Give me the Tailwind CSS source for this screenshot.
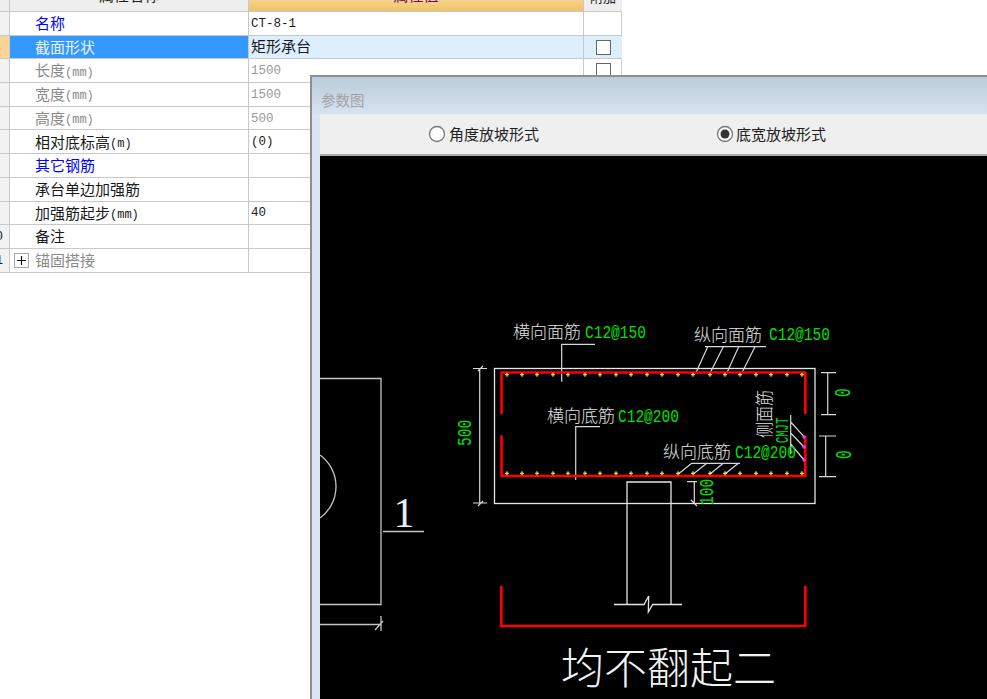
<!DOCTYPE html>
<html lang="zh">
<head>
    <meta charset="UTF-8">
    <title>参数图</title>
    <script src="https://cdn.jsdelivr.net/npm/@tailwindcss/browser@4"></script>
</head>
<body class="relative w-[987px] h-[699px] overflow-hidden bg-white font-['Liberation_Mono','Noto_Sans_CJK_SC',monospace] text-[15px] text-[#1a1a1a]">

    <!-- 属性表 -->
    <div class="w-[622px] grid grid-cols-[10px_239px_335px_38px] grid-rows-[12px_repeat(11,23.7px)] border-r border-[#d0d0d0]">
        <div class="bg-[#eeeeee] border-r border-b border-[#c8c8c8]"></div>
        <div class="bg-[#eeeeee] border-r border-b border-[#c8c8c8] overflow-hidden flex items-end justify-center leading-[15px]"><span class="mb-[6px]">属性名称</span></div>
        <div class="bg-gradient-to-b from-[#f6d48c] to-[#f1c264] border-r border-b border-[#c8c8c8] overflow-hidden flex items-end justify-center leading-[15px] text-[#6a0a6a]"><span class="mb-[6px]">属性值</span></div>
        <div class="bg-[#eeeeee] border-b border-[#c8c8c8] overflow-hidden flex items-end justify-center leading-[13px] text-[13px]"><span class="mb-[6px]">附加</span></div>

        <div class="bg-[#f2f2f2] border-r border-b border-[#c8c8c8]"></div>
        <div class="border-r border-b border-[#c8c8c8] pl-[25px] pt-[6px] flex items-center text-[#0000ff]">名称</div>
        <div class="border-r border-b border-[#c8c8c8] pl-[2px] pt-[2px] flex items-center text-[12.5px]">CT-8-1</div>
        <div class="border-b border-[#c8c8c8]"></div>

        <div class="bg-[#fbd596] border-r border-b border-[#c8c8c8]"></div>
        <div class="bg-[#3399ff] border-r border-b border-[#c8c8c8] pl-[25px] pt-[6px] flex items-center text-[#eaf4ff]">截面形状</div>
        <div class="bg-[#ddeeff] border-r border-b border-[#c8c8c8] pl-[2px] pt-[4px] flex items-center">矩形承台</div>
        <div class="bg-[#ddeeff] border-b border-[#c8c8c8] flex items-center justify-center"><span class="block w-[15px] h-[15px] bg-white border border-[#666666]"></span></div>

        <div class="bg-[#f2f2f2] border-r border-b border-[#c8c8c8]"></div>
        <div class="border-r border-b border-[#c8c8c8] pl-[25px] pt-[6px] flex items-center text-[#8a8a8a]">长度<span class="text-[12px] mb-[2px]">(mm)</span></div>
        <div class="border-r border-b border-[#c8c8c8] pl-[2px] pt-[2px] flex items-center text-[12.5px] text-[#999999]">1500</div>
        <div class="border-b border-[#c8c8c8] flex items-center justify-center"><span class="block w-[15px] h-[15px] bg-white border border-[#666666]"></span></div>

        <div class="bg-[#f2f2f2] border-r border-b border-[#c8c8c8]"></div>
        <div class="border-r border-b border-[#c8c8c8] pl-[25px] pt-[6px] flex items-center text-[#8a8a8a]">宽度<span class="text-[12px] mb-[2px]">(mm)</span></div>
        <div class="border-r border-b border-[#c8c8c8] pl-[2px] pt-[2px] flex items-center text-[12.5px] text-[#999999]">1500</div>
        <div class="border-b border-[#c8c8c8]"></div>

        <div class="bg-[#f2f2f2] border-r border-b border-[#c8c8c8]"></div>
        <div class="border-r border-b border-[#c8c8c8] pl-[25px] pt-[6px] flex items-center text-[#8a8a8a]">高度<span class="text-[12px] mb-[2px]">(mm)</span></div>
        <div class="border-r border-b border-[#c8c8c8] pl-[2px] pt-[2px] flex items-center text-[12.5px] text-[#999999]">500</div>
        <div class="border-b border-[#c8c8c8]"></div>

        <div class="bg-[#f2f2f2] border-r border-b border-[#c8c8c8]"></div>
        <div class="border-r border-b border-[#c8c8c8] pl-[25px] pt-[6px] flex items-center">相对底标高<span class="text-[12px] mb-[2px]">(m)</span></div>
        <div class="border-r border-b border-[#c8c8c8] pl-[2px] pt-[2px] flex items-center text-[12.5px]">(0)</div>
        <div class="border-b border-[#c8c8c8]"></div>

        <div class="bg-[#f2f2f2] border-r border-b border-[#c8c8c8]"></div>
        <div class="border-r border-b border-[#c8c8c8] pl-[25px] pt-[6px] flex items-center text-[#0000ff]">其它钢筋</div>
        <div class="border-r border-b border-[#c8c8c8]"></div>
        <div class="border-b border-[#c8c8c8]"></div>

        <div class="bg-[#f2f2f2] border-r border-b border-[#c8c8c8]"></div>
        <div class="border-r border-b border-[#c8c8c8] pl-[25px] pt-[6px] flex items-center">承台单边加强筋</div>
        <div class="border-r border-b border-[#c8c8c8]"></div>
        <div class="border-b border-[#c8c8c8]"></div>

        <div class="bg-[#f2f2f2] border-r border-b border-[#c8c8c8]"></div>
        <div class="border-r border-b border-[#c8c8c8] pl-[25px] pt-[6px] flex items-center">加强筋起步<span class="text-[12px] mb-[2px]">(mm)</span></div>
        <div class="border-r border-b border-[#c8c8c8] pl-[2px] pt-[2px] flex items-center text-[12.5px]">40</div>
        <div class="border-b border-[#c8c8c8]"></div>

        <div class="bg-[#f2f2f2] border-r border-b border-[#c8c8c8] overflow-hidden flex items-center justify-end pr-[6px] pt-[2px] text-[12.5px]"><span class="shrink-0">10</span></div>
        <div class="border-r border-b border-[#c8c8c8] pl-[25px] pt-[6px] flex items-center">备注</div>
        <div class="border-r border-b border-[#c8c8c8]"></div>
        <div class="border-b border-[#c8c8c8]"></div>

        <div class="bg-[#f2f2f2] border-r border-b border-[#c8c8c8] overflow-hidden flex items-center justify-end pr-[6px] pt-[2px] text-[12.5px]"><span class="shrink-0">11</span></div>
        <div class="border-r border-b border-[#c8c8c8] pl-[4px] flex items-center gap-[6px] text-[#8a8a8a]">
            <svg width="15" height="15" viewBox="0 0 15 15"><rect x="0.5" y="0.5" width="14" height="14" fill="#fff" stroke="#a8a8a8"/><path d="M3 7.5h9M7.5 3v9" stroke="#111" stroke-width="1.2"/></svg>
            <span class="pt-[6px]">锚固搭接</span>
        </div>
        <div class="border-r border-b border-[#c8c8c8]"></div>
        <div class="border-b border-[#c8c8c8]"></div>
    </div>

    <!-- 参数图窗口 -->
    <div class="absolute left-[310px] top-[75px] w-[677px] h-[624px] flex flex-col border-l-2 border-t-2 border-[#8f8f8f] bg-[#d9e5f2]">
        <div class="h-[37px] shrink-0 flex items-center pl-[9px] pt-[15px] bg-gradient-to-b from-[#bbccd9] to-[#d6e3f1] text-[14.5px] text-[#a3a3a3]">参数图</div>
        <div class="flex-1 ml-[8px] flex flex-col min-h-0">
            <div class="h-[42px] shrink-0 flex items-center bg-[#efefef] border-b-2 border-[#a9a9a9] text-[15px] text-[#222222]">
                <div class="flex items-center ml-[108px] w-[288px]">
                    <svg class="mr-[3px]" width="18" height="18" viewBox="0 0 18 18"><circle cx="9" cy="9" r="7.5" fill="#fff" stroke="#777" stroke-width="1.3"/></svg>
                    <span class="pt-[6px]">角度放坡形式</span>
                </div>
                <div class="flex items-center">
                    <svg class="mr-[2px]" width="18" height="18" viewBox="0 0 18 18"><circle cx="9" cy="9" r="7.5" fill="#fff" stroke="#777" stroke-width="1.3"/><circle cx="9" cy="9" r="4.5" fill="#333"/></svg>
                    <span class="pt-[6px]">底宽放坡形式</span>
                </div>
            </div>
            <!-- viewBox 用页面坐标,方便对照截图 -->
            <svg class="block flex-1 bg-black" width="667" height="543" viewBox="320 156 667 543" fill="none" font-family="'Noto Sans CJK SC', sans-serif">
                <!-- 左侧剖面 -->
                <g stroke="#c4c4c4" stroke-width="1.3">
                    <path d="M320 378.5H381V604.5H320"/>
                    <path d="M320 455A39 39 0 0 1 320 518"/>
                    <path d="M383 531.5H424"/>
                    <path d="M320 624.5H381M381 616V631M375 630L383 621"/>
                </g>
                <text x="404" y="527" text-anchor="middle" font-family="'Liberation Serif', serif" font-size="42" fill="#eeeeee">1</text>

                <!-- 外框和柱 -->
                <g stroke="#e6e6e6" stroke-width="1.3">
                    <rect x="494.5" y="368.5" width="320.5" height="135"/>
                    <path d="M627 503.5V482H671V604.5M627 503V604.5"/>
                    <path d="M614 604.5H644L648.7 596L648.3 612L652.7 604.5H682"/>
                </g>

                <!-- 标注线 -->
                <g stroke="#d8d8d8" stroke-width="1.2">
                    <path d="M479.7 368.5V503M473 368.5H487M473 503H487M478 371L483 366M478 506L483 501"/>
                    <path d="M827.7 372.7V414.7M821 372.7H836M821 414.7H836"/>
                    <path d="M825.7 436V476.7M819 436H836M819 476.7H836"/>
                    <path d="M694.3 481.7V503M687 481.7H697M691 500L697 506"/>
                    <path d="M561.7 381.7V344.3H595"/>
                    <path d="M575.7 480V426.7H600"/>
                    <path d="M705 346.7H766M707.7 346.7L695.7 373.3M723.3 346.7L710 373.3M738.7 346.7L726.7 373.3M755 346.7L741.7 373.3"/>
                    <path d="M691.7 463.3H740M691.7 463.3L678.3 474M706.7 463.3L693.3 474M723.3 463.3L710 474M738.3 463.3L725 474"/>
                    <path d="M790.7 415V454M790.7 422L804 436.7M790.7 433L804 447M790.7 444L804 460"/>
                </g>

                <!-- 钢筋 -->
                <g stroke="#ff0000" stroke-width="2.6" stroke-linejoin="round">
                    <path d="M501.5 414V372.5H805.3V414"/>
                    <path d="M501.5 435.3V476H805.3V436"/>
                    <path d="M501.3 585.7V626H805.3V585.7"/>
                </g>
                <g stroke="#ffff33" stroke-width="1.1">
                    <path d="M505 374.7h4M507 372.7v4M520 374.7h4M522 372.7v4M535 374.7h4M537 372.7v4M551 374.7h4M553 372.7v4M566 374.7h4M568 372.7v4M583 374.7h4M585 372.7v4M598 374.7h4M600 372.7v4M614 374.7h4M616 372.7v4M629 374.7h4M631 372.7v4M645 374.7h4M647 372.7v4M660 374.7h4M662 372.7v4M676 374.7h4M678 372.7v4M691 374.7h4M693 372.7v4M708 374.7h4M710 372.7v4M723 374.7h4M725 372.7v4M738 374.7h4M740 372.7v4M754 374.7h4M756 372.7v4M769 374.7h4M771 372.7v4M785 374.7h4M787 372.7v4M800 374.7h4M802 372.7v4"/>
                    <path d="M505 473.3h4M507 471.3v4M520 473.3h4M522 471.3v4M535 473.3h4M537 471.3v4M551 473.3h4M553 471.3v4M566 473.3h4M568 471.3v4M583 473.3h4M585 471.3v4M598 473.3h4M600 471.3v4M614 473.3h4M616 471.3v4M629 473.3h4M631 471.3v4M645 473.3h4M647 471.3v4M660 473.3h4M662 471.3v4M676 473.3h4M678 471.3v4M691 473.3h4M693 471.3v4M708 473.3h4M710 471.3v4M723 473.3h4M725 471.3v4M738 473.3h4M740 471.3v4M754 473.3h4M756 471.3v4M769 473.3h4M771 471.3v4M785 473.3h4M787 471.3v4M800 473.3h4M802 471.3v4"/>
                </g>
                <g fill="#ff33ff">
                    <circle cx="804" cy="437" r="1.7"/><circle cx="804" cy="447" r="1.7"/><circle cx="804" cy="460" r="1.7"/>
                </g>

                <!-- 白色文字 -->
                <g fill="#e0e0e0" font-size="17" font-weight="300">
                    <text x="513" y="338">横向面筋</text>
                    <text x="547" y="422">横向底筋</text>
                    <text x="694" y="341">纵向面筋</text>
                    <text x="663" y="458">纵向底筋</text>
                    <text transform="translate(771 438) rotate(-90) scale(1 1.15)" font-size="16">侧面筋</text>
                </g>
                <text x="561" y="684" font-size="43" font-weight="200" fill="#f2f2f2">均不翻起二</text>

                <!-- 绿色文字 -->
                <g fill="#00e000" font-family="'Liberation Mono', monospace" font-size="14.5">
                    <text transform="translate(585 338) scale(1 1.3)">C12@150</text>
                    <text transform="translate(618 422) scale(1 1.3)">C12@200</text>
                    <text transform="translate(769 340) scale(1 1.3)">C12@150</text>
                    <text transform="translate(735 458) scale(1 1.3)">C12@200</text>
                    <text transform="translate(471 446) rotate(-90) scale(1 1.4)">500</text>
                    <text transform="translate(713 505) rotate(-90) scale(1 1.4)">100</text>
                    <text transform="translate(788 443) rotate(-90) scale(1 1.7)" font-size="10.5">CMJT</text>
                    <text transform="translate(850 397) rotate(-90) scale(1 1.5)">0</text>
                    <text transform="translate(851 459) rotate(-90) scale(1 1.5)">0</text>
                </g>
            </svg>
        </div>
    </div>
</body>
</html>
